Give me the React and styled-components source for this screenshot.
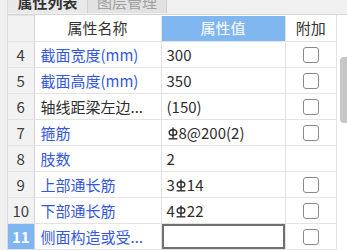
import React from 'react';
import styled, { createGlobalStyle } from 'styled-components';

const GlobalStyle = createGlobalStyle`
  html, body {
    margin: 0;
    padding: 0;
    background: #ffffff;
    overflow: hidden;
  }
  body {
    font-family: "Noto Sans CJK SC", "Noto Sans", sans-serif;
  }
`;

const Frame = styled.div`
  display: flex;
  width: 347px;
  height: 250px;
  overflow: hidden;
  background: #ffffff;
`;

const LeftStrip = styled.div`
  width: 7px;
  flex: none;
  background: #f0f0f0;
  border-right: 1px solid #dcdcdc;
`;

const Main = styled.div`
  flex: 1;
  display: flex;
  flex-direction: column;
  min-width: 0;
`;

const TabBar = styled.div`
  display: flex;
  height: 14px;
  background: #f0f0f0;
  border-bottom: 1px solid #d6d6d6;
  overflow: hidden;
`;

const Tab = styled.div`
  width: ${({ w }) => w}px;
  height: 24px;
  margin-top: -11px;
  display: flex;
  align-items: center;
  justify-content: center;
  font-size: 15px;
  font-weight: ${({ active }) => (active ? 700 : 400)};
  color: ${({ active }) => (active ? '#333' : '#a0a0a0')};
  background: ${({ active }) => (active ? '#e9e9e9' : '#e2e2e2')};
  border-right: 1px solid #d0d0d0;
  box-sizing: border-box;
`;

const Body = styled.div`
  flex: 1;
  display: flex;
  min-height: 0;
`;

const Grid = styled.table`
  width: 328px;
  flex: none;
  border-collapse: collapse;
  table-layout: fixed;
  font-size: 15px;
`;

const Cell = styled.td`
  height: 25px;
  padding: 0;
  border: 1px solid #e3e3e3;
  white-space: nowrap;
  overflow: hidden;
  line-height: 20px;
`;

const NumCell = styled(Cell)`
  text-align: center;
  font-size: 15px;
  color: ${({ active }) => (active ? '#ffffff' : '#3c3c3c')};
  font-weight: ${({ active }) => (active ? 700 : 400)};
  background: ${({ active }) => (active ? '#7fb6f1' : '#f2f2f2')};
  border-left: none;
  border-right-color: #d2d2d2;
`;

const HeadCell = styled(Cell)`
  text-align: center;
  font-weight: 400;
  color: ${({ blue }) => (blue ? '#ffffff' : '#333')};
  background: ${({ blue }) => (blue ? '#80b7f1' : '#ffffff')};
  border-top: none;
`;

const NameCell = styled(Cell)`
  padding-left: 6px;
  color: ${({ plain }) => (plain ? '#2d2d2d' : '#3557dd')};
`;

const ValueCell = styled(Cell)`
  padding-left: 5px;
  color: #2d2d2d;
`;

const EditCell = styled(Cell)`
  padding: 0;
`;

const Editor = styled.div`
  height: 25px;
  box-sizing: border-box;
  border: 2px solid #6f6f6f;
`;

const CheckCell = styled(Cell)`
  text-align: center;
  border-right: none;
`;

const Check = styled.span`
  display: inline-block;
  width: 16px;
  height: 16px;
  box-sizing: border-box;
  border: 1px solid #8a8a8a;
  border-radius: 3px;
  vertical-align: middle;
  margin-top: -2px;
`;

const ScrollArea = styled.div`
  flex: 1;
  border-left: 1px solid #e3e3e3;
  display: flex;
  justify-content: flex-end;
`;

const Thumb = styled.div`
  width: 7px;
  height: 66px;
  margin-top: 42px;
  background: #c6c6c6;
  border-radius: 4px 0 0 4px;
`;

const Rebar = () => (
  <svg width="10" height="13" viewBox="0 0 10 13" style={{ verticalAlign: '-1px', margin: '0 1px' }}>
    <ellipse cx="5" cy="5.5" rx="3.8" ry="2.8" fill="none" stroke="#2d2d2d" strokeWidth="1.4" />
    <line x1="5" y1="0.5" x2="5" y2="11.5" stroke="#2d2d2d" strokeWidth="1.5" />
    <line x1="0.6" y1="11.8" x2="9.4" y2="11.8" stroke="#2d2d2d" strokeWidth="1.4" />
  </svg>
);

const rows = [
  { n: 4, name: '截面宽度(mm)', value: '300', check: true },
  { n: 5, name: '截面高度(mm)', value: '350', check: true },
  { n: 6, name: '轴线距梁左边...', value: '(150)', check: true, plain: true },
  { n: 7, name: '箍筋', value: <><Rebar />8@200(2)</>, check: true },
  { n: 8, name: '肢数', value: '2', check: false },
  { n: 9, name: '上部通长筋', value: <>3<Rebar />14</>, check: true },
  { n: 10, name: '下部通长筋', value: <>4<Rebar />22</>, check: true },
  { n: 11, name: '侧面构造或受...', edit: true, check: true, active: true },
];

export default function App() {
  return (
    <Frame>
      <GlobalStyle />
      <LeftStrip />
      <Main>
        <TabBar>
          <Tab w={80} active>属性列表</Tab>
          <Tab w={79}>图层管理</Tab>
        </TabBar>
        <Body>
          <Grid>
            <colgroup>
              <col style={{ width: 26 }} />
              <col style={{ width: 127 }} />
              <col style={{ width: 124 }} />
              <col style={{ width: 51 }} />
            </colgroup>
            <thead>
              <tr>
                <NumCell as="th" />
                <HeadCell as="th">属性名称</HeadCell>
                <HeadCell as="th" blue>属性值</HeadCell>
                <HeadCell as="th" style={{ borderRight: 'none' }}>附加</HeadCell>
              </tr>
            </thead>
            <tbody>
              {rows.map((r) => (
                <tr key={r.n}>
                  <NumCell active={r.active}>{r.n}</NumCell>
                  <NameCell plain={r.plain}>{r.name}</NameCell>
                  {r.edit ? (
                    <EditCell><Editor /></EditCell>
                  ) : (
                    <ValueCell>{r.value}</ValueCell>
                  )}
                  <CheckCell>{r.check && <Check />}</CheckCell>
                </tr>
              ))}
            </tbody>
          </Grid>
          <ScrollArea>
            <Thumb />
          </ScrollArea>
        </Body>
      </Main>
    </Frame>
  );
}
